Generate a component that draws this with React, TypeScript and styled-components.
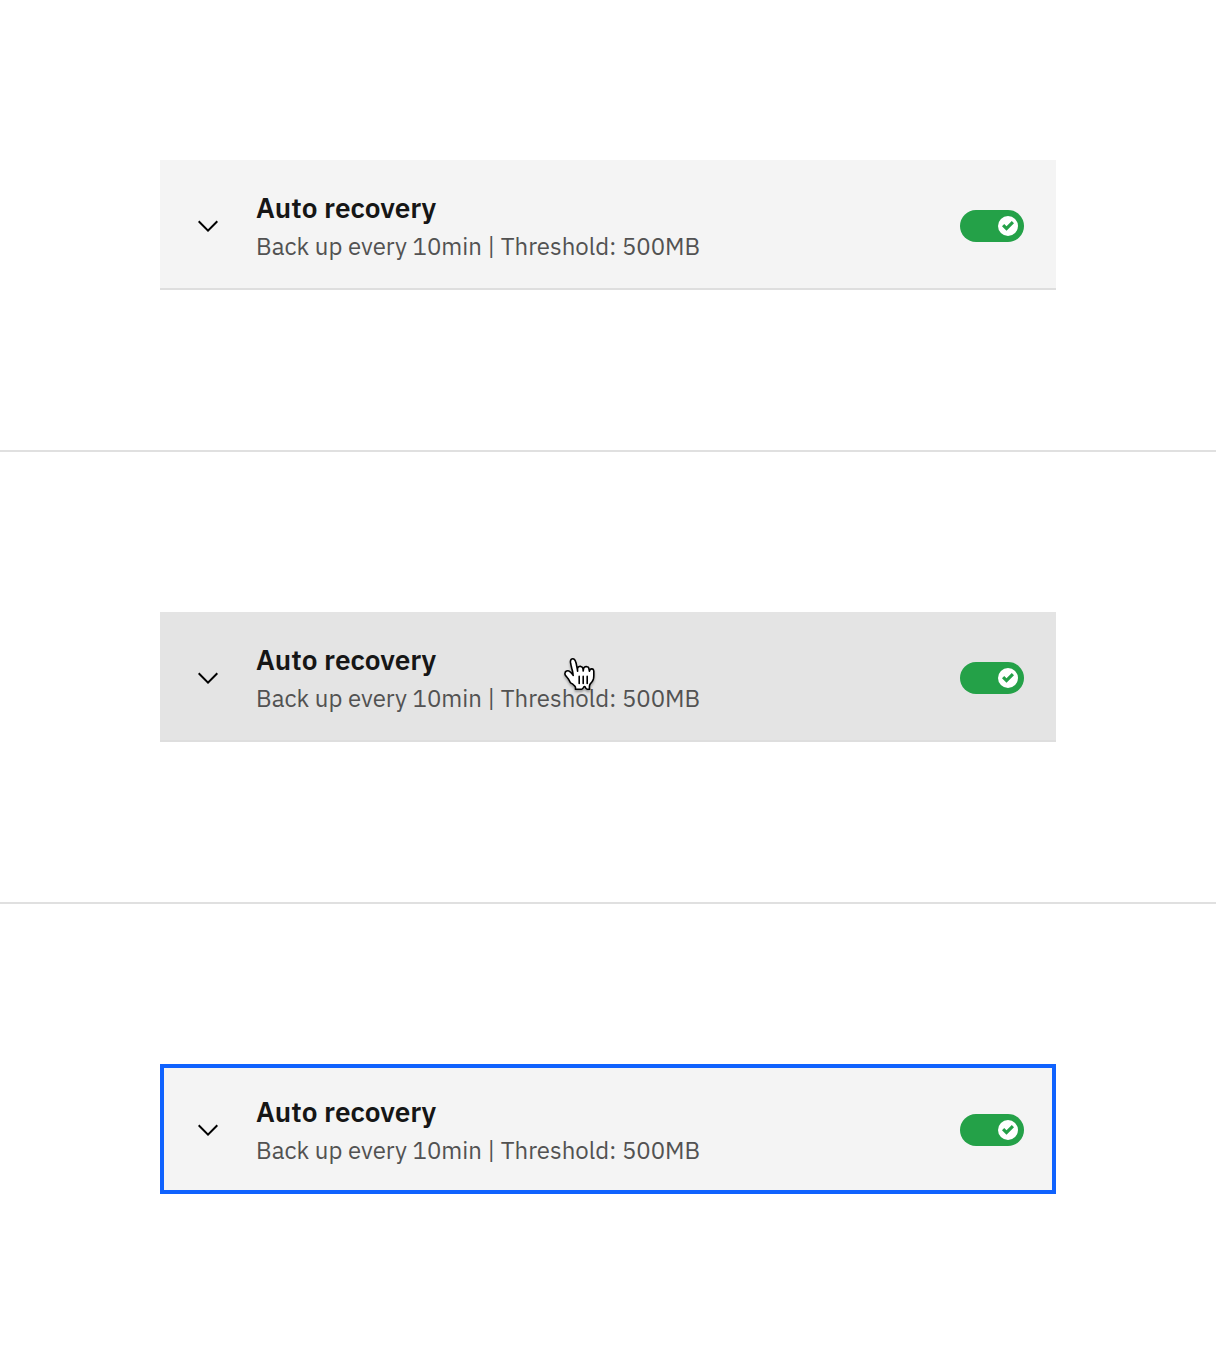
import React, { useId, useState } from "react";
import styled, { createGlobalStyle, css } from "styled-components";

type Look = "enabled" | "hover" | "focus";

const GlobalStyle = createGlobalStyle`
  *, *::before, *::after { box-sizing: border-box; }
  body {
    margin: 0;
    background: #ffffff;
    color: #161616;
    font-family: "IBM Plex Sans", Roboto, "Liberation Sans", sans-serif;
  }
`;

const Section = styled.section`
  padding: 160px;

  & + & {
    border-top: 2px solid #e0e0e0;
  }
`;

const Tile = styled.div<{ $look: Look }>`
  position: relative;
  display: flex;
  align-items: center;
  gap: 32px;
  padding: 30px 32px 26px;
  background: ${({ $look }) => ($look === "hover" ? "#e4e4e4" : "#f4f4f4")};
  border-bottom: 2px solid #dedede;
  ${({ $look }) =>
    $look === "focus" &&
    css`
      outline: 4px solid #0f62fe;
      outline-offset: -4px;
    `}
`;

const Expander = styled.button`
  flex: 1;
  min-width: 0;
  display: flex;
  align-items: center;
  gap: 32px;
  padding: 0;
  border: 0;
  background: none;
  color: inherit;
  font: inherit;
  text-align: left;
  cursor: pointer;
`;

const Chevron = styled.svg`
  flex: none;
  width: 32px;
  height: 32px;
`;

const Copy = styled.span`
  display: flex;
  flex-direction: column;
  gap: 4px;
`;

const Title = styled.span`
  font-size: 28px;
  line-height: 36px;
  font-weight: 600;
`;

const Summary = styled.span`
  color: #525252;
  font-size: 24px;
  line-height: 32px;
`;

const Toggle = styled.label`
  flex: none;
  display: flex;
  justify-content: flex-end;
  align-items: center;
  width: 64px;
  height: 32px;
  padding: 6px;
  border-radius: 16px;
  background: #8d8d8d;
  cursor: pointer;

  &:has(input:checked) {
    background: #24a148;
  }
  &:has(input:not(:checked)) {
    justify-content: flex-start;
  }
`;

const ToggleInput = styled.input`
  position: absolute;
  width: 1px;
  height: 1px;
  margin: 0;
  opacity: 0;
`;

const Knob = styled.svg`
  width: 20px;
  height: 20px;
`;

const Pointer = styled.svg`
  position: absolute;
  left: 404px;
  top: 44px;
  width: 34px;
  height: 38px;
  pointer-events: none;
  filter: drop-shadow(0 2px 1px rgba(0, 0, 0, 0.3));
`;

function HandPointer() {
  return (
    <Pointer viewBox="8 7 17 19" aria-hidden="true">
      <path
        d="m11.3 20.4c-.3-.4-.6-1.1-1.2-2-.3-.5-1.2-1.5-1.5-1.9-.2-.4-.2-.6-.1-1 .1-.6.7-1.1 1.4-1.1.5 0 1 .4 1.4.7.2.2.5.6.7.8.2.2.2.3.4.5.2.3.3.5.2.1-.1-.5-.2-1.3-.4-2.1-.1-.6-.2-.7-.3-1.1-.1-.5-.2-.8-.3-1.3-.1-.3-.2-1.1-.3-1.5-.1-.5-.1-1.4.3-1.8.3-.3.9-.4 1.3-.2.5.3.8 1 .9 1.3.2.5.4 1.2.5 2 .2 1 .5 2.5.5 2.8 0-.4-.1-1.1 0-1.5.1-.3.3-.7.7-.8.3-.1.6-.1.9-.1.3.1.6.3.8.5.4.6.4 1.9.4 1.8.1-.4.1-1.2.3-1.6.1-.2.5-.4.7-.5.3-.1.7-.1 1 0 .2 0 .6.3.7.5.2.3.3 1.3.4 1.7 0 .1.1-.4.3-.7.4-.6 1.8-.8 1.9.6v2.3c0 .4-.1 1.3-.2 1.7-.1.3-.4 1-.7 1.4 0 0-1.1 1.2-1.2 1.8-.1.6-.1.6-.1 1s.1.9.1.9-.8.1-1.2 0-.9-.8-1-1.1c-.2-.3-.5-.3-.7 0-.2.4-.7 1.1-1.1 1.1-.7.1-2.1 0-3.1 0 0 0 .2-1-.2-1.4-.3-.3-.8-.8-1.1-1.1z"
        fill="#fff"
        stroke="#000"
        strokeWidth="0.8"
        strokeLinejoin="round"
      />
      <path
        d="M19.6 20.7v-3.5M17.6 20.7v-3.5M15.6 20.7v-3.5"
        fill="none"
        stroke="#000"
        strokeWidth="0.8"
        strokeLinecap="round"
      />
    </Pointer>
  );
}

function SettingTile({ look }: { look: Look }) {
  const [on, setOn] = useState(true);
  const [open, setOpen] = useState(false);
  const id = useId();
  return (
    <Section>
      <Tile $look={look}>
        <Expander type="button" aria-expanded={open} onClick={() => setOpen(!open)}>
          <Chevron viewBox="0 0 16 16" aria-hidden="true">
            <path d="M8 11 3 6l.7-.7L8 9.6l4.3-4.3.7.7z" fill="#000" />
          </Chevron>
          <Copy>
            <Title>Auto recovery</Title>
            <Summary>Back up every 10min | Threshold: 500MB</Summary>
          </Copy>
        </Expander>
        <Toggle htmlFor={id}>
          <ToggleInput
            id={id}
            type="checkbox"
            aria-label="Auto recovery"
            checked={on}
            onChange={(e) => setOn(e.target.checked)}
          />
          <Knob viewBox="0 0 20 20" aria-hidden="true">
            <circle cx="10" cy="10" r="10" fill="#fff" />
            {on && <path d="M4 10.3 6.2 8 8.5 10.3 13.8 5 16 7.3 8.5 14.8z" fill="#24a148" />}
          </Knob>
        </Toggle>
        {look === "hover" && <HandPointer />}
      </Tile>
    </Section>
  );
}

export default function App() {
  return (
    <main>
      <GlobalStyle />
      <SettingTile look="enabled" />
      <SettingTile look="hover" />
      <SettingTile look="focus" />
    </main>
  );
}
